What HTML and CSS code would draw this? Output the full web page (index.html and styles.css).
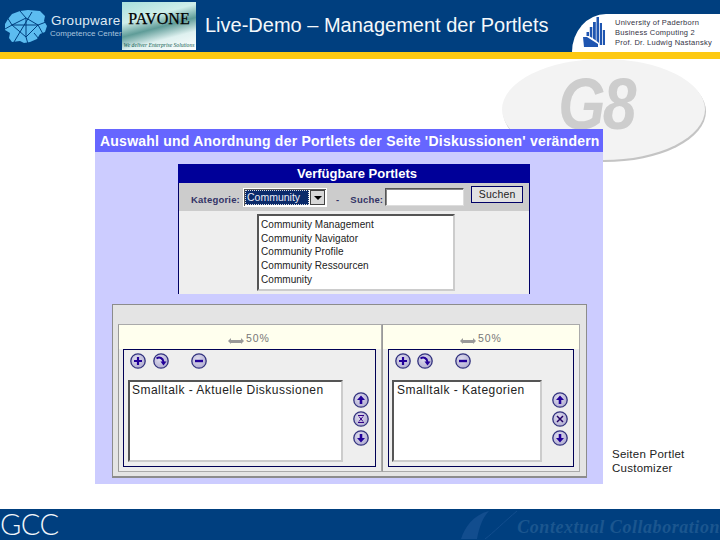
FILE: index.html
```html
<!DOCTYPE html>
<html lang="de">
<head>
<meta charset="utf-8">
<title>Live-Demo – Management der Portlets</title>
<link rel="stylesheet" href="styles.css">
</head>
<body>
<svg class="defs" width="0" height="0" aria-hidden="true">
  <defs>
    <radialGradient id="btn" cx="40%" cy="35%" r="70%">
      <stop offset="0" stop-color="#dedcee"/>
      <stop offset="1" stop-color="#b0acd0"/>
    </radialGradient>
    <symbol id="i-plus" viewBox="0 0 16 16"><circle cx="8" cy="8" r="7.2" fill="url(#btn)" stroke="#33337f" stroke-width="1.3"/><path d="M8 4v8M4 8h8" stroke="#220099" stroke-width="2.2"/></symbol>
    <symbol id="i-minus" viewBox="0 0 16 16"><circle cx="8" cy="8" r="7.2" fill="url(#btn)" stroke="#33337f" stroke-width="1.3"/><path d="M4 8h8" stroke="#220099" stroke-width="2.4"/></symbol>
    <symbol id="i-redo" viewBox="0 0 16 16"><circle cx="8" cy="8" r="7.2" fill="url(#btn)" stroke="#33337f" stroke-width="1.3"/><path d="M3.500 5.500C6.500 3.500 10 5 10.500 9" fill="none" stroke="#220099" stroke-width="2"/><path d="M7.500 8.500h6l-3 4z" fill="#220099"/></symbol>
    <symbol id="i-up" viewBox="0 0 16 16"><circle cx="8" cy="8" r="7.2" fill="url(#btn)" stroke="#33337f" stroke-width="1.3"/><path d="M8 3.500l4 4.500H9.300v4H6.700V8H4z" fill="#220099"/></symbol>
    <symbol id="i-down" viewBox="0 0 16 16"><circle cx="8" cy="8" r="7.2" fill="url(#btn)" stroke="#33337f" stroke-width="1.3"/><path d="M8 12.500L12 8H9.300V4H6.700v4H4z" fill="#220099"/></symbol>
    <symbol id="i-x" viewBox="0 0 16 16"><circle cx="8" cy="8" r="7.2" fill="url(#btn)" stroke="#33337f" stroke-width="1.3"/><path d="M5 4.500h6M5 11.500h6M6 5.500l4 5M10 5.500l-4 5" fill="none" stroke="#330088" stroke-width="1"/></symbol>
    <symbol id="i-x2" viewBox="0 0 16 16"><circle cx="8" cy="8" r="7.2" fill="url(#btn)" stroke="#33337f" stroke-width="1.3"/><path d="M5 5l6 6M11 5l-6 6" fill="none" stroke="#220066" stroke-width="1.500"/></symbol>
  </defs>
</svg>

<div class="slide">
  <header class="top">
    <svg class="globe" viewBox="0 0 43 36" aria-hidden="true">
      <path d="M8 5l8-3 8-1 12 1 5 5-1 5 3 5-2 6-5 2-3 5-7 3-6 1-4-2-8 1-3-4 1-5-5-3 0-6 3-5z" fill="#5cbcf0"/>
      <g fill="none" stroke="#003f7f" stroke-width="1">
        <path d="M8 16l14-7 12 7-12 12z"/>
        <path d="M22 9l0 19M8 16h26M13 28L28 3M1 20l7-4M34 16l8-3M3 8l5 8M34 16l5 9M16 2l6 7M22 28l2 7M13 28l-3 5M30 24l5 6"/>
      </g>
    </svg>
    <div class="brand">
      <span class="brand-main">Groupware</span>
      <span class="brand-sub">Competence Center</span>
    </div>
    <div class="pavone">
      <span class="pavone-name">PAVONE</span>
      <span class="pavone-tag">We deliver Enterprise Solutions</span>
    </div>
    <h1 class="headline">Live-Demo – Management der Portlets</h1>
    <div class="uni">
      <svg class="uni-logo" viewBox="0 0 22 30" aria-hidden="true">
        <g fill="#1f55b0">
          <path d="M13.500 0h2.500v26l-2.500-2z"/>
          <path d="M10 5h2.800v18.500L10 21.500z"/>
          <path d="M16.800 6h2.200v22h-2.200z"/>
          <path d="M6.800 10h2.500v11l-2.500-1.500z"/>
          <path d="M19.800 13H22v15h-2.200z"/>
          <path d="M3.500 15h2.500v4h-2.500z"/>
          <path d="M0 20h4l11 7v3H1z"/>
        </g>
      </svg>
      <div class="uni-text">
        <span>University of Paderborn</span>
        <span>Business Computing 2</span>
        <span>Prof. Dr. Ludwig Nastansky</span>
      </div>
    </div>
  </header>
  <div class="stripe"></div>

  <main class="stage">
    <div class="g8"><span class="g8-text">G8</span></div>

    <section class="screen">
      <h2 class="screen-title">Auswahl und Anordnung der Portlets der Seite 'Diskussionen' verändern</h2>

      <div class="avail">
        <div class="avail-head">Verfügbare Portlets</div>
        <div class="filter">
          <span class="lbl">Kategorie:</span>
          <div class="combo"><span class="combo-val">Community</span><span class="combo-btn"></span></div>
          <span class="lbl dash">-</span>
          <span class="lbl">Suche:</span>
          <div class="search"></div>
          <div class="go">Suchen</div>
        </div>
        <div class="avail-body">
          <ul class="pick">
            <li>Community Management</li>
            <li>Community Navigator</li>
            <li>Community Profile</li>
            <li>Community Ressourcen</li>
            <li class="pick-last">Community</li>
          </ul>
        </div>
      </div>

      <div class="layout">
        <div class="col col-a">
          <div class="col-head"><span class="width-arrow"></span><span class="pct">50%</span></div>
          <div class="portlets">
            <div class="pl-main">
              <div class="tools">
                <svg class="ic"><use href="#i-plus"/></svg>
                <svg class="ic"><use href="#i-redo"/></svg>
                <svg class="ic ic-far"><use href="#i-minus"/></svg>
              </div>
              <div class="slots slots-a">Smalltalk - Aktuelle Diskussionen</div>
            </div>
            <div class="moves">
              <svg class="ic"><use href="#i-up"/></svg>
              <svg class="ic"><use href="#i-x"/></svg>
              <svg class="ic"><use href="#i-down"/></svg>
            </div>
          </div>
        </div>
        <div class="col col-b">
          <div class="col-head"><span class="width-arrow"></span><span class="pct">50%</span></div>
          <div class="portlets">
            <div class="pl-main">
              <div class="tools">
                <svg class="ic"><use href="#i-plus"/></svg>
                <svg class="ic"><use href="#i-redo"/></svg>
                <svg class="ic ic-far"><use href="#i-minus"/></svg>
              </div>
              <div class="slots slots-b">Smalltalk - Kategorien</div>
            </div>
            <div class="moves">
              <svg class="ic"><use href="#i-up"/></svg>
              <svg class="ic"><use href="#i-x2"/></svg>
              <svg class="ic"><use href="#i-down"/></svg>
            </div>
          </div>
        </div>
      </div>
    </section>

    <p class="caption">Seiten Portlet<br>Customizer</p>
  </main>

  <footer class="bottom">
    <span class="gcc">GCC</span>
    <div class="motto">
      <svg class="swoosh" viewBox="0 0 60 31" aria-hidden="true">
        <path d="M2 30C6 18 14 6 30 2c-6 6-10 16-12 28z" fill="#124d8e"/>
        <path d="M26 30C34 24 46 12 58 2" fill="none" stroke="#124d8e" stroke-width="1"/>
      </svg>
      <span class="motto-text">Contextual Collaboration</span>
    </div>
  </footer>
</div>
</body>
</html>
```

FILE: styles.css
```css
* { box-sizing: border-box; }
html, body { margin: 0; padding: 0; background: #fff; }
body { font-family: "Liberation Sans", Arial, sans-serif; }
.defs { display: block; width: 0; height: 0; }

.slide { width: 720px; height: 540px; display: flex; flex-direction: column; overflow: hidden; }

/* header */
.top { height: 52px; flex: none; background: #003f7f; display: flex; align-items: flex-start; }
.globe { width: 43px; height: 36px; margin: 9px 0 0 4px; flex: none; }
.brand { width: 71px; margin: 14px 0 0 4px; display: flex; flex-direction: column; flex: none; white-space: nowrap; }
.brand-main { font-size: 13.5px; line-height: 14px; letter-spacing: .3px; color: #dfe9f3; }
.brand-sub { font-size: 8px; line-height: 11px; color: #a9c4de; margin-left: -1px; }
.pavone { width: 74px; height: 48px; margin-top: 2px; flex: none; display: flex; flex-direction: column; align-items: center; overflow: hidden;
  background: linear-gradient(165deg, #a8e0dc 0%, #cfeeea 32%, #5f9c98 52%, #dff1f0 72%, #fff 100%); }
.pavone-name { font-family: "Liberation Serif", serif; font-size: 16px; line-height: 17px; margin-top: 8px; color: #000; -webkit-text-stroke: .25px #000; }
.pavone-tag { font-family: "Liberation Serif", serif; font-style: italic; font-size: 5.6px; line-height: 7px; margin-top: 15px; color: #0c5b50; white-space: nowrap; }
.headline { margin: 13px 0 0 9px; font-size: 20px; line-height: 24px; font-weight: 400; color: #f4f8fb; white-space: nowrap; }
.uni { margin-left: auto; margin-top: 14px; width: 148px; height: 38px; flex: none; background: #fff; border-top-left-radius: 34px 38px; display: flex; align-items: flex-start; }
.uni-logo { width: 22px; height: 30px; margin: 3px 0 0 11px; flex: none; }
.uni-text { margin: 4px 0 0 10px; display: flex; flex-direction: column; font-size: 7.5px; line-height: 10px; color: #334; letter-spacing: .25px; white-space: nowrap; }
.stripe { height: 7px; flex: none; background: #fdc913; }

/* main */
.stage { flex: 1; position: relative; display: flex; align-items: flex-start; padding: 70px 0 0 95px; }
.g8 { position: absolute; left: 502px; top: 0; width: 203px; height: 101px; border-radius: 50%; background: #f3f3f3; box-shadow: 1px 2px 0 #c4c4c4; display: flex; align-items: center; justify-content: center; }
.g8-text { font-size: 66px; font-weight: 700; font-style: italic; color: #cdcdcd; line-height: 60px; margin: -12px 14px 0 0; letter-spacing: -3px; transform: scale(.92, 1.1); }

.screen { position: relative; width: 508px; height: 355px; background: #ccccff; flex: none; }
.screen-title { margin: 0; height: 23px; background: #6666ff; color: #fff; font-size: 14px; line-height: 25px; font-weight: 700; padding-left: 5px; letter-spacing: .23px; white-space: nowrap; }

.avail { width: 352px; height: 130px; margin: 12px 0 0 83px; border-left: 1px solid #000066; border-right: 1px solid #000066; display: flex; flex-direction: column; }
.avail-head { height: 19px; background: #000099; color: #fff; font-size: 13px; font-weight: 700; line-height: 20px; text-align: center; margin: 0 -1px; padding-left: 6px; }
.filter { height: 28px; background: #cccccc; display: flex; align-items: flex-start; padding-left: 12px; }
.lbl { font-size: 9.5px; line-height: 12px; margin-top: 11px; font-weight: 700; color: #333366; letter-spacing: .2px; white-space: nowrap; }
.dash { margin-left: 9px; margin-right: 11px; }
.combo { width: 84px; height: 19px; margin: 5px 0 0 3px; background: #fff; border: 1px solid #fff; padding: 1px; display: flex; gap: 1px; box-shadow: inset 1px 1px 0 #555; }
.combo-val { flex: 1; background: #0a2a6a; color: #e8ecf8; font-size: 10.5px; line-height: 14px; padding-left: 2px; outline: 1px dotted #ddd; outline-offset: -1px; overflow: hidden; }
.combo-btn { width: 15px; background: #d8d8d8; border: 1px solid #444; position: relative; }
.combo-btn::after { content: ""; position: absolute; left: 3px; top: 5px; border: 4px solid transparent; border-top: 4px solid #000; border-bottom: 0; }
.search { width: 79px; height: 18px; margin: 5px 0 0 2px; background: #fff; border: 1px solid; border-color: #555 #ddd #ddd #555; box-shadow: inset 1px 1px 0 #888; }
.go { width: 52px; height: 17px; margin: 3px 0 0 7px; background: #e2e2e2; border: 1px solid #000066; font-size: 10.5px; line-height: 15px; text-align: center; color: #222; letter-spacing: .2px; }
.avail-body { flex: 1; background: #eeeeee; padding: 3px 0 0 78px; }
.pick { list-style: none; margin: 0; padding: 2px 0 0 2px; width: 198px; height: 77px; background: #fff; border: 2px solid; border-color: #555 #ccc #ccc #555; }
.pick li { font-size: 10px; line-height: 13.6px; color: #222; white-space: nowrap; letter-spacing: .05px; }
.pick .pick-last { margin-top: 1px; }

.layout { width: 475px; height: 174px; margin: 10px 0 0 17px; background: #e4e4e4; border: 1px solid #8c8c8c; border-bottom-width: 2px; padding: 19px 6px 4px 5px; display: flex; }
.col { height: 100%; border: 1px solid #aaa; border-left-color: #999; display: flex; flex-direction: column; background: #ececec; }
.col-a { width: 264px; padding: 0 5px 4px 4px; }
.col-b { width: 198px; padding: 0 5px 4px 5px; }
.col-head { height: 24px; background: #ffffee; position: relative; flex: none; display: flex; align-items: flex-start; }
.col-a .col-head { margin: 0 -5px 0 -4px; padding-left: 112px; }
.col-b .col-head { margin: 0 -5px; padding-left: 80px; }
.width-arrow { width: 10px; height: 3px; margin-top: 15px; background: #999; position: relative; flex: none; }
.width-arrow::before, .width-arrow::after { content: ""; position: absolute; top: -2px; border: 3.5px solid transparent; }
.width-arrow::before { left: -3px; border-right-color: #999; border-left: 0; }
.width-arrow::after { right: -3px; border-left-color: #999; border-right: 0; }
.pct { margin: 7px 0 0 5px; font-size: 10.5px; line-height: 12px; letter-spacing: .9px; color: #777; }
.portlets { flex: 1; background: #eeeeee; border: 1px solid #000055; display: flex; padding: 0 0 0 4px; }
.col-b .portlets { padding-left: 3px; }
.pl-main { flex: none; }
.tools { height: 30px; padding: 3px 0 0 2px; display: flex; gap: 7px; }
.col-b .tools { gap: 6px; padding-left: 3px; }
.col-b .ic-far { margin-left: 16px; }
.ic { width: 16px; height: 16px; flex: none; display: block; }
.ic-far { margin-left: 15px; }
.slots { height: 82px; background: #fff; border: 2px solid; border-color: #555 #ccc #ccc #555; font-size: 12px; line-height: 14px; padding: 1px 0 0 2px; color: #222; letter-spacing: .47px; white-space: nowrap; }
.slots-a { width: 215px; }
.slots-b { width: 150px; padding-left: 3px; }
.moves { margin: 42px 0 0 10px; display: flex; flex-direction: column; gap: 3px; }

.caption { margin: 318px 0 0 9px; font-size: 11.5px; line-height: 14px; color: #222; letter-spacing: .25px; white-space: nowrap; }

/* footer */
.bottom { height: 31px; flex: none; background: #003f7f; display: flex; justify-content: space-between; align-items: flex-start; }
.gcc { font-family: Lato, sans-serif; font-weight: 300; font-size: 29px; line-height: 29px; color: #f2f6fa; letter-spacing: -.5px; }
.motto { display: flex; align-items: flex-start; }
.swoosh { width: 60px; height: 31px; margin: 0 -2px 0 0; }
.motto-text { font-family: "Liberation Serif", serif; font-weight: 700; font-style: italic; font-size: 18px; line-height: 20px; margin-top: 8px; color: #1b568f; letter-spacing: .55px; white-space: nowrap; }
```
